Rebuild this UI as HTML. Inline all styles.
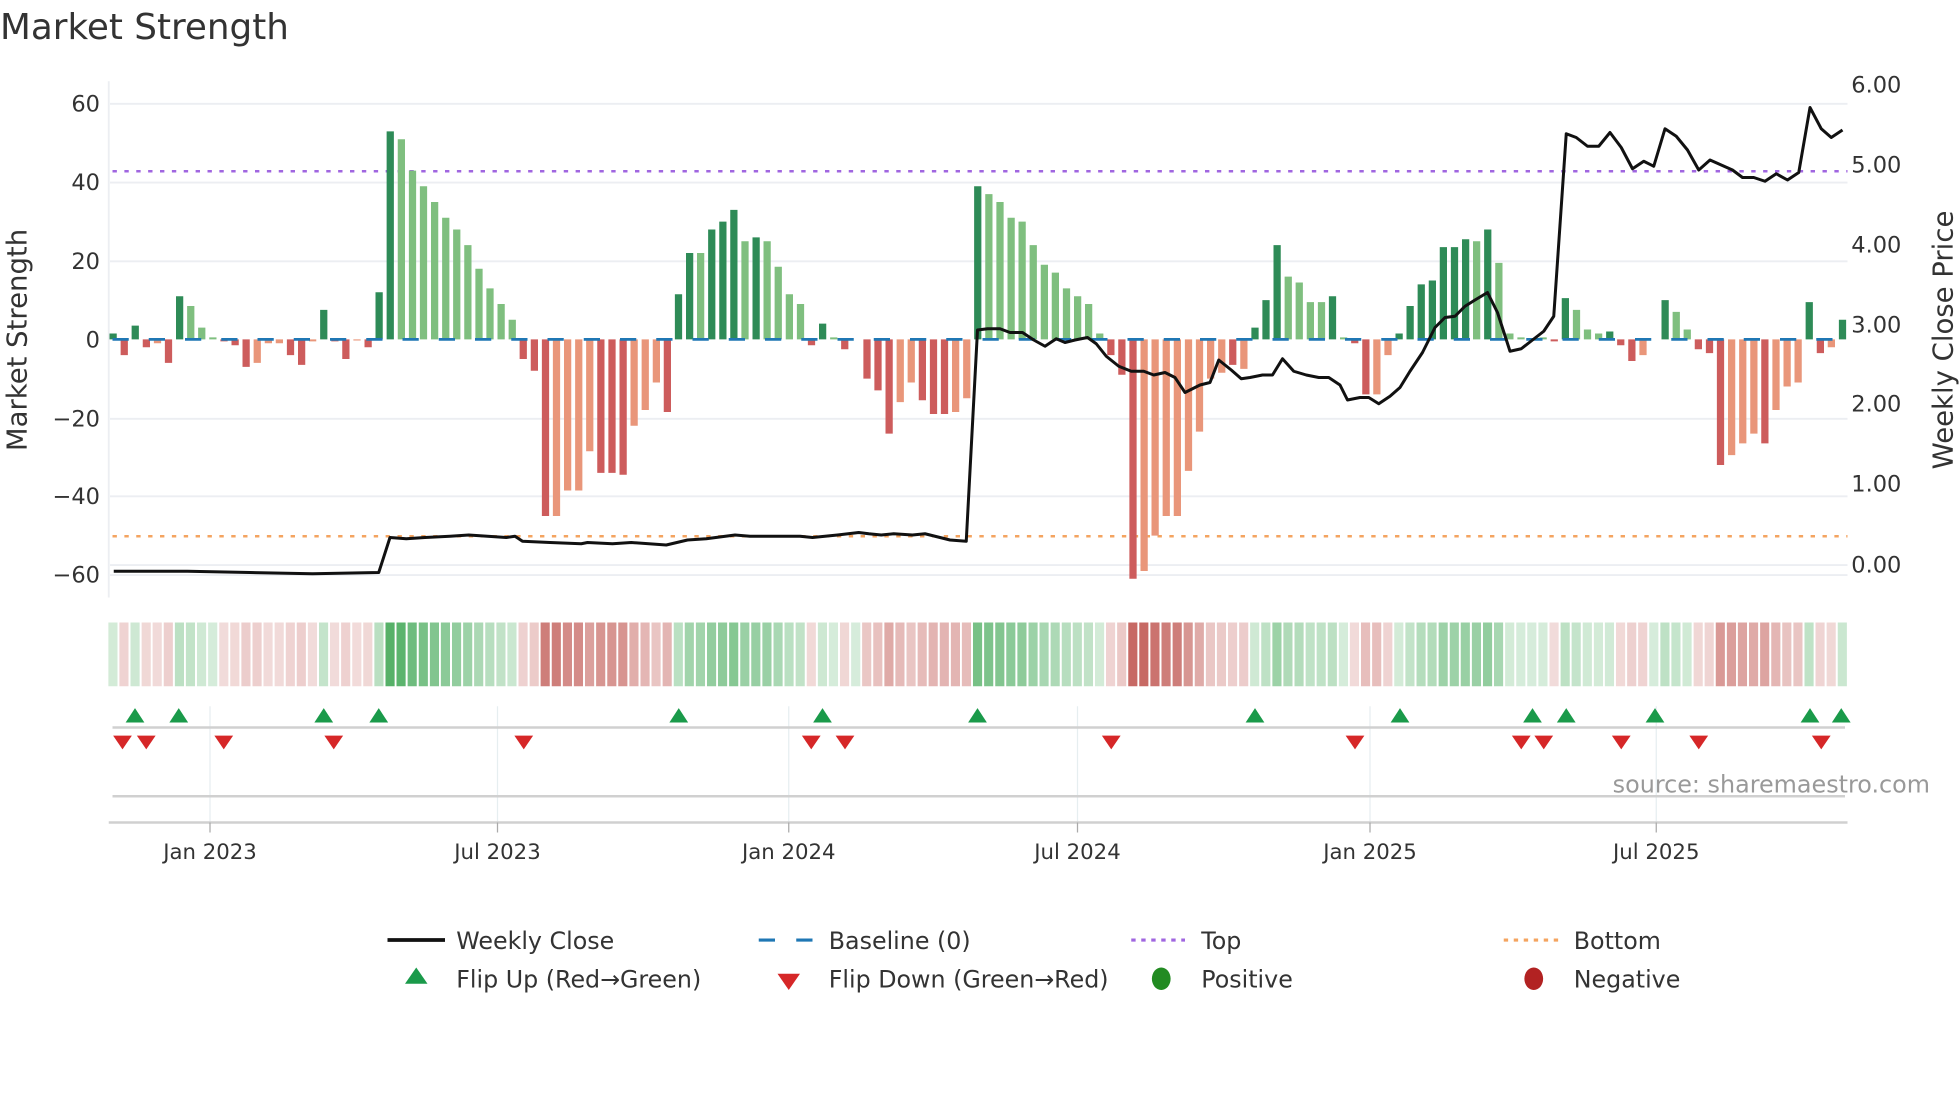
<!DOCTYPE html>
<html><head><meta charset="utf-8">
<style>
html,body{margin:0;padding:0;background:#fff;}
svg{display:block;}
text{font-family:"DejaVu Sans","Liberation Sans",sans-serif;fill:#333;}
</style></head>
<body>
<svg id="s" width="1960" height="1102" viewBox="0 0 1568 881.6" xmlns="http://www.w3.org/2000/svg">
<text x="0" y="31" font-size="28.6">Market Strength</text>
<g stroke="#eceef2" stroke-width="1.5">
<line x1="88" x2="1478" y1="83" y2="83"/><line x1="88" x2="1478" y1="146" y2="146"/>
<line x1="88" x2="1478" y1="209" y2="209"/><line x1="88" x2="1478" y1="335" y2="335"/>
<line x1="88" x2="1478" y1="397" y2="397"/><line x1="88" x2="1478" y1="452" y2="452"/><line x1="88" x2="1478" y1="460" y2="460"/>
</g>
<line x1="87" x2="87" y1="65" y2="478" stroke="#eceef2" stroke-width="1.5"/>
<g font-size="18" text-anchor="end">
<text x="80" y="89">60</text><text x="80" y="152">40</text><text x="80" y="215">20</text>
<text x="80" y="278">0</text><text x="80" y="341">−20</text><text x="80" y="403">−40</text><text x="80" y="466">−60</text>
</g>
<g font-size="18">
<text x="1481" y="74">6.00</text><text x="1481" y="138">5.00</text><text x="1481" y="202">4.00</text>
<text x="1481" y="266">3.00</text><text x="1481" y="329">2.00</text><text x="1481" y="393">1.00</text><text x="1481" y="458">0.00</text>
</g>
<text transform="translate(21,272) rotate(-90)" font-size="22" text-anchor="middle">Market Strength</text>
<text transform="translate(1562,272) rotate(-90)" font-size="22" text-anchor="middle">Weekly Close Price</text>
<line x1="90" x2="1478" y1="137" y2="137" stroke="#a066e0" stroke-width="2" stroke-dasharray="3.5 6"/>
<line x1="90" x2="1478" y1="429" y2="429" stroke="#f4a460" stroke-width="2" stroke-dasharray="3.5 6"/>
<g id="bars"></g>
<line x1="90" x2="1478" y1="271.5" y2="271.5" stroke="#1f77b4" stroke-width="2.2" stroke-dasharray="13 16"/>
<polyline id="price" fill="none" stroke="#111" stroke-width="2.4" stroke-linejoin="round"/>
<g id="strip"></g>
<g stroke="#e6eef0" stroke-width="1">
<line x1="168" x2="168" y1="565" y2="658"/><line x1="398" x2="398" y1="565" y2="658"/>
<line x1="631" x2="631" y1="565" y2="658"/><line x1="862" x2="862" y1="565" y2="658"/>
<line x1="1096" x2="1096" y1="565" y2="658"/><line x1="1325" x2="1325" y1="565" y2="658"/>
</g>
<line x1="90" x2="1476" y1="582" y2="582" stroke="#d0d0d0" stroke-width="2"/>
<line x1="90" x2="1476" y1="637" y2="637" stroke="#d0d0d0" stroke-width="2"/>
<line x1="87" x2="1478" y1="658" y2="658" stroke="#d0d0d0" stroke-width="2"/>
<g stroke="#aaa" stroke-width="1">
<line x1="168" x2="168" y1="658" y2="666"/><line x1="398" x2="398" y1="658" y2="666"/>
<line x1="631" x2="631" y1="658" y2="666"/><line x1="862" x2="862" y1="658" y2="666"/>
<line x1="1096" x2="1096" y1="658" y2="666"/><line x1="1325" x2="1325" y1="658" y2="666"/>
</g>
<g font-size="17" text-anchor="middle">
<text x="168" y="687">Jan 2023</text><text x="398" y="687">Jul 2023</text><text x="631" y="687">Jan 2024</text>
<text x="862" y="687">Jul 2024</text><text x="1096" y="687">Jan 2025</text><text x="1325" y="687">Jul 2025</text>
</g>
<text x="1544" y="634" font-size="19.1" text-anchor="end" style="fill:#999">source: sharemaestro.com</text>
<g id="marks"></g>
<line x1="310" x2="356" y1="752" y2="752" stroke="#111" stroke-width="3"/>
<line x1="607" x2="650" y1="752" y2="752" stroke="#1f77b4" stroke-width="2.5" stroke-dasharray="13 17"/>
<line x1="905" x2="948" y1="752" y2="752" stroke="#a066e0" stroke-width="2.5" stroke-dasharray="3.5 4.5"/>
<line x1="1203" x2="1247" y1="752" y2="752" stroke="#f4a460" stroke-width="2.5" stroke-dasharray="3.5 4.5"/>
<polygon points="333,774 324,787 342,787" fill="#1a9a4a"/>
<polygon points="622,779 640,779 631,792" fill="#d62728"/>
<ellipse cx="929" cy="783" rx="7.5" ry="9" fill="#228b22"/>
<ellipse cx="1227" cy="783" rx="7.5" ry="9" fill="#b22222"/>
<g font-size="19">
<text x="365" y="759">Weekly Close</text><text x="663" y="759">Baseline (0)</text>
<text x="961" y="759">Top</text><text x="1259" y="759">Bottom</text>
<text x="365" y="790">Flip Up (Red→Green)</text><text x="663" y="790">Flip Down (Green→Red)</text>
<text x="961" y="790">Positive</text><text x="1259" y="790">Negative</text>
</g>
</svg>
<script>
var B="1.5D -4R 3.5D -2R -1P -6R 11D 8.5L 3L 0.5L -0.5R -1.5R -7R -6P -1P -1P -4R -6.5R -0.5P 7.5D -0.5R -5R -0.3P -2R 12D 53D 51L 43L 39L 35L 31L 28L 24L 18L 13L 9L 5L -5R -8R -45R -45P -38.5P -38.5P -28.5P -34R -34R -34.5R -22P -18P -11P -18.5R 11.5D 22D 22L 28D 30D 33D 25L 26D 25L 18.5L 11.5L 9L -1.5R 4D 0.5L -2.5R 0L -10R -13R -24R -16P -11P -15.5R -19R -19R -18.5P -15P 39D 37L 35L 31L 30L 24L 19L 17L 13L 11L 9L 1.5L -4R -9R -61R -59P -50P -45P -45P -33.5P -23.5P -10P -8.5P -6.5R -7.5P 3D 10D 24D 16L 14.5L 9.5L 9.5L 11D 0.5L -1R -14R -14P -4P 1.5D 8.5D 14D 15D 23.5D 23.5D 25.5D 25L 28D 19.5L 1.5L 0.5L 0L 0.5L -0.5R 10.5D 7.5L 2.5L 1.5L 2D -1.5R -5.5R -4P 0L 10D 7L 2.5L -2.5R -3.5R -32R -29.5P -26.5P -24P -26.5R -18P -12P -11P 9.5D -3.5R -2P 5D".split(" ");
var C={D:"#2e8b57",L:"#7fbf7f",R:"#cd5c5c",P:"#e9967a"};
var n=B.length,x0=90.5,st=(1474-90.5)/(n-1),bw=5.8,h="",sh="";
function mix(a,t){return "rgb("+a.map(function(c){return Math.round(255+(c-255)*t)}).join(",")+")";}
for(var i=0;i<n;i++){var v=parseFloat(B[i]),c=B[i].slice(-1),x=x0+i*st;
 var y=271.5,hh=Math.abs(v)*3.14;
 if(hh>0.3)h+='<rect x="'+(x-bw/2).toFixed(1)+'" y="'+(v>0?y-hh:y).toFixed(1)+'" width="'+bw+'" height="'+hh.toFixed(1)+'" fill="'+C[c]+'"/>';
 var t=0.22+0.72*Math.min(1,Math.abs(v)/55);
 var col=(c=="D"||c=="L"||(v==0))?mix([70,170,90],t):mix([195,95,90],t);
 sh+='<rect x="'+(x-st/2+0.6).toFixed(1)+'" y="498" width="'+(st-1.6).toFixed(1)+'" height="51" fill="'+col+'"/>';}
document.getElementById("bars").innerHTML=h;document.getElementById("strip").innerHTML=sh;
var P="91,457 150,457 200,458 250,459 303,458 312,430 325,431 340,430 360,429 375,428 390,429 405,430 412,429 418,433 440,434 465,435 470,434 490,435 505,434 533,436 550,432 565,431 588,428 600,429 640,429 650,430 670,428 687,426 695,427 705,428 715,427 730,428 740,427 760,432 773,433 782,264 790,263 800,263 808,266 818,266 827,272 836,277 845,271 852,274 860,272 870,270 877,275 885,285 895,293 905,297 915,297 923,300 932,298 940,302 948,314 960,308 968,306 975,288 985,296 993,303 1000,302 1010,300 1018,300 1026,287 1035,297 1045,300 1055,302 1063,302 1072,308 1078,320 1088,318 1095,318 1103,323 1112,317 1120,310 1128,297 1138,282 1148,262 1156,254 1164,253 1172,245 1180,240 1190,234 1198,250 1208,281 1217,279 1226,272 1235,265 1243,253 1253,107 1261,110 1270,117 1279,117 1288,106 1297,118 1306,135 1315,129 1323,133 1332,103 1341,109 1350,120 1359,136 1368,128 1377,132 1386,136 1394,142 1403,142 1412,145 1421,139 1430,144 1439,138 1448,86 1457,103 1465,110 1474,104";
document.getElementById("price").setAttribute("points",P);
var U=[108,143,259,303,543,658,782,1004,1120,1226,1253,1324,1448,1473],D=[98,117,179,267,419,649,676,889,1084,1217,1235,1297,1359,1457],m="";
U.forEach(function(x){m+='<polygon points="'+x+',566.5 '+(x-7.5)+',578 '+(x+7.5)+',578" fill="#1a9a4a"/>';});
D.forEach(function(x){m+='<polygon points="'+(x-7.5)+',588.5 '+(x+7.5)+',588.5 '+x+',599.5" fill="#d62728"/>';});
document.getElementById("marks").innerHTML=m;
</script>
</body></html>
